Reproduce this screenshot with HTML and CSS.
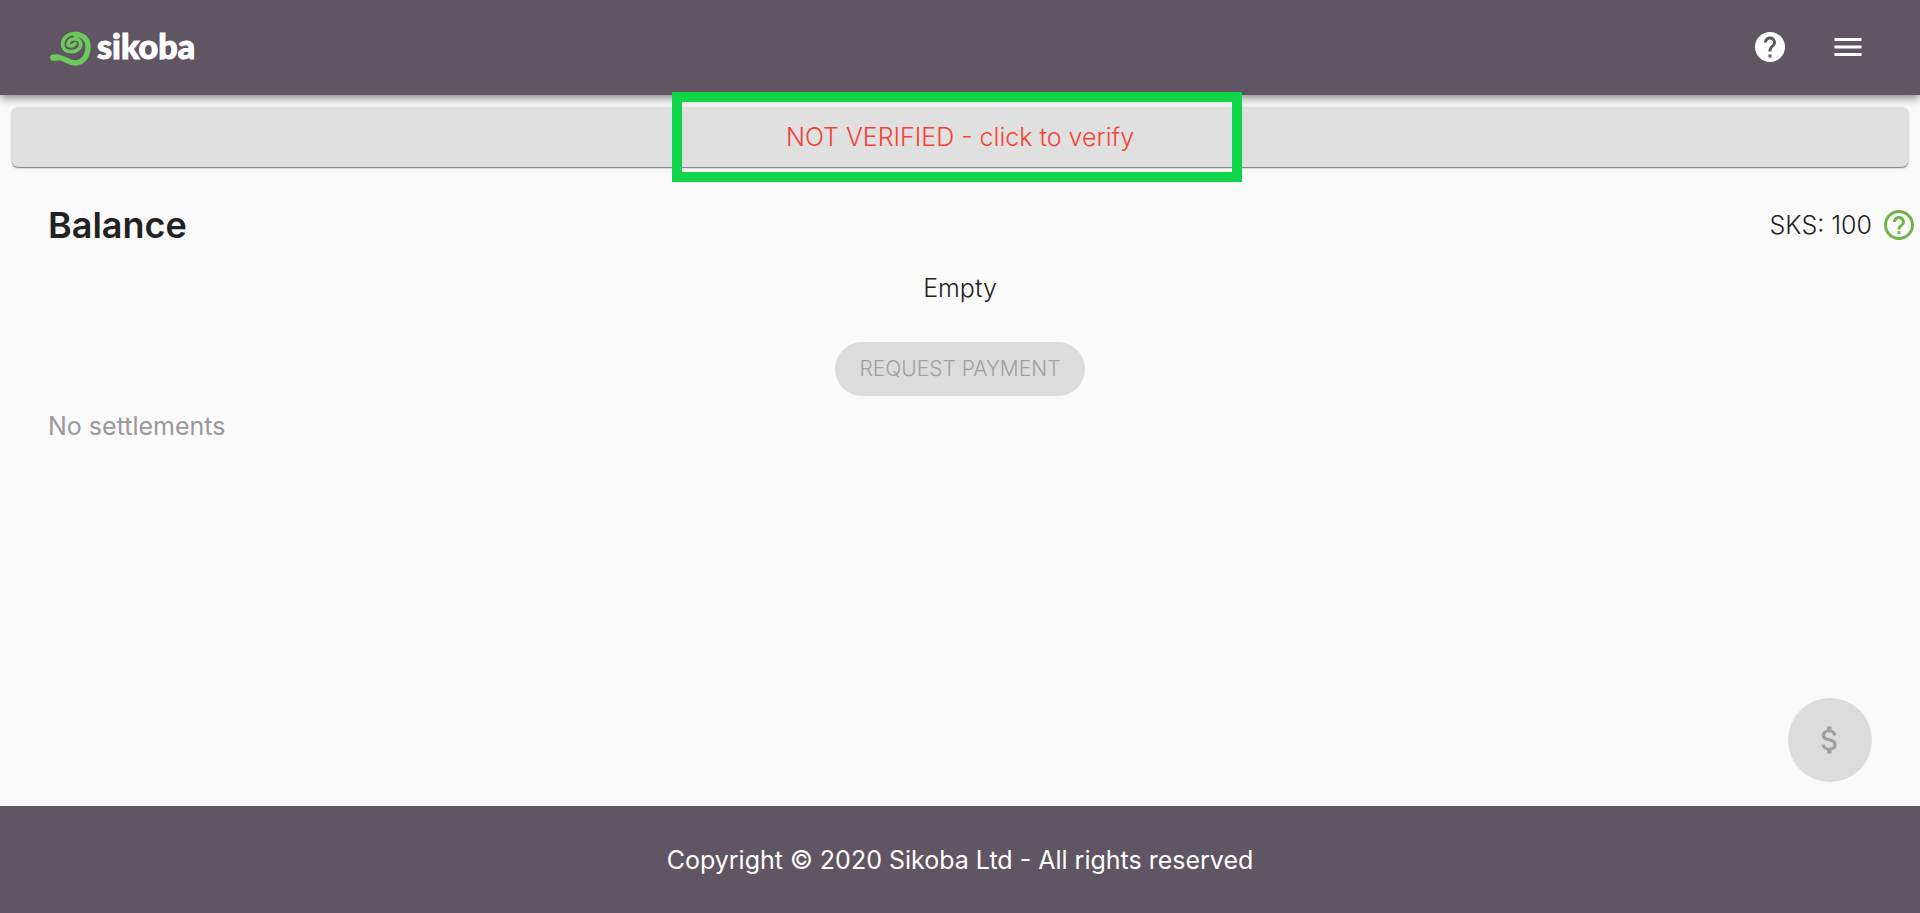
FILE: index.html
```html
<!DOCTYPE html>
<html lang="en">
<head>
<meta charset="utf-8">
<meta name="viewport" content="width=device-width, initial-scale=1">
<title>Sikoba</title>
<link rel="stylesheet" href="styles.css">
</head>
<body class="page">
<header class="header">
  <a class="brand" href="#">
    <svg class="brand-mark" viewBox="0 0 120 105" aria-hidden="true">
      <path class="brand-tip" d="M10 80L24 79"/>
      <path class="brand-tail" d="M10 80H24C44 80 56 96 76 96C100 95 114 74 114 47C114 24 98 11 77 10"/>
      <path class="brand-curl" d="M79 8C56 5 38 20 38 40C39 55 50 63 66 62C82 61 93 51 92 38C91 27 80 22 70 24C58 26 53 34 55 42"/>
      <path class="brand-curl" d="M55 42C58 46 70 46 75 38"/>
    </svg>
    <span class="brand-name">sikoba</span>
  </a>
  <nav class="actions">
    <button class="icon-button" type="button" aria-label="Help">
      <svg class="icon" viewBox="0 0 24 24"><path d="M12 2C6.48 2 2 6.48 2 12s4.48 10 10 10 10-4.480 10-10S17.520 2 12 2zm1 17h-2v-2h2v2zm2.070-7.750l-.9.920C13.450 12.900 13 13.500 13 15h-2v-.5c0-1.100.45-2.100 1.170-2.830l1.240-1.260c.37-.36.590-.86.590-1.410 0-1.100-.9-2-2-2s-2 .9-2 2H8c0-2.210 1.790-4 4-4s4 1.790 4 4c0 .88-.36 1.680-.93 2.250z"/></svg>
    </button>
    <button class="icon-button" type="button" aria-label="Menu">
      <svg class="icon" viewBox="0 0 24 24"><path d="M3 18h18v-2H3v2zm0-5h18v-2H3v2zm0-7v2h18V6H3z"/></svg>
    </button>
  </nav>
</header>
<main class="main">
  <div class="notice">
    <button class="verify" type="button">NOT VERIFIED - click to verify</button>
    <div class="highlight"></div>
  </div>
  <section class="balance">
    <h1 class="title">Balance</h1>
    <div class="credits">
      <span>SKS: 100</span>
      <button class="credits-help" type="button" aria-label="About SKS">
        <svg class="icon" viewBox="0 0 24 24"><path d="M11 18h2v-2h-2v2zm1-16C6.480 2 2 6.480 2 12s4.480 10 10 10 10-4.480 10-10S17.520 2 12 2zm0 18c-4.410 0-8-3.590-8-8s3.590-8 8-8 8 3.590 8 8-3.590 8-8 8zm0-14c-2.210 0-4 1.790-4 4h2c0-1.100.9-2 2-2s2 .9 2 2c0 2-3 1.750-3 5h2c0-2.250 3-2.500 3-5 0-2.210-1.790-4-4-4z"/></svg>
      </button>
    </div>
  </section>
  <p class="empty">Empty</p>
  <button class="request" type="button" disabled>REQUEST PAYMENT</button>
  <p class="settlements">No settlements</p>
  <button class="pay" type="button" disabled aria-label="Pay">
    <svg class="icon" viewBox="0 0 24 24"><path d="M11.800 10.900c-2.270-.59-3-1.200-3-2.150 0-1.090 1.010-1.850 2.700-1.850 1.780 0 2.440.85 2.500 2.100h2.210c-.07-1.720-1.120-3.300-3.210-3.810V3h-3v2.160c-1.940.42-3.500 1.680-3.500 3.610 0 2.310 1.910 3.460 4.700 4.130 2.500.6 3 1.480 3 2.410 0 .69-.49 1.790-2.700 1.790-2.060 0-2.870-.92-2.980-2.100h-2.200c.12 2.190 1.760 3.420 3.680 3.830V21h3v-2.150c1.950-.37 3.500-1.500 3.500-3.550 0-2.840-2.430-3.810-4.700-4.400z"/></svg>
  </button>
</main>
<footer class="footer">Copyright © 2020 Sikoba Ltd - All rights reserved</footer>
</body>
</html>
```
FILE: styles.css
```css
* { box-sizing: border-box; }
.page {
  display: flex;
  flex-direction: column;
  min-height: 100vh;
  margin: 0;
  background: #fafafa;
  color: #222;
  font: 300 25px/32px Inter, "Liberation Sans", sans-serif;
}
button {
  border: 0;
  padding: 0;
  font: inherit;
  color: inherit;
  background: none;
  cursor: pointer;
}
button:disabled { cursor: default; }
.header {
  display: flex;
  align-items: center;
  justify-content: space-between;
  height: 95px;
  padding: 0 45px 2px 50px;
  background: #605562;
  color: #fff;
  box-shadow: 0 3px 6px -1px rgba(0,0,0,.25), 0 6px 8px rgba(0,0,0,.14), 0 1px 14px rgba(0,0,0,.12);
}
.brand {
  display: flex;
  align-items: flex-end;
  gap: 7px;
  padding-bottom: 2px;
  color: #fff;
  text-decoration: none;
}
.brand-mark {
  width: 40px;
  height: 35px;
  fill: none;
  stroke: #6cc95c;
  stroke-linecap: round;
  stroke-linejoin: round;
  overflow: visible;
}
.brand-tip { stroke-width: 19px; }
.brand-tail { stroke-width: 16px; }
.brand-curl { stroke-width: 11px; }
.brand-name {
  font: 900 34px/40px Lato, sans-serif;
  -webkit-text-stroke: 1px #fff;
}
.actions { display: flex; gap: 24px; }
.icon-button { width: 54px; height: 54px; }
.icon {
  display: block;
  width: 36px;
  height: 36px;
  margin: auto;
  fill: currentColor;
}
.main {
  position: relative;
  flex: 1;
  display: flex;
  flex-direction: column;
}
.notice { position: relative; padding: 12px; }
.verify {
  display: block;
  width: 100%;
  height: 60px;
  border-radius: 6px;
  background: #e0e0e0;
  color: #f44336;
  box-shadow: 0 1px 1px rgba(0,0,0,.4), 0 1px 3px rgba(0,0,0,.2);
}
.highlight {
  position: absolute;
  top: -3px;
  left: 35%;
  width: 570px;
  height: 90px;
  border: 10px solid #10d448;
  pointer-events: none;
}
.balance {
  display: flex;
  align-items: center;
  justify-content: space-between;
  margin-top: 24px;
  padding: 0 3px 0 48px;
}
.title { margin: 0; font-size: 36px; font-weight: 600; line-height: 44px; }
.credits { display: flex; align-items: center; gap: 9px; }
.credits-help { color: #70b348; }
.empty { margin: 25px 0 38px; text-align: center; }
.request {
  align-self: center;
  height: 54px;
  padding: 0 24px;
  border-radius: 27px;
  background: #dcdcdc;
  color: #a0a0a0;
  font-size: 21px;
}
.settlements { margin: 14px 48px; color: #999; font-weight: 400; }
.pay {
  position: absolute;
  right: 48px;
  bottom: 24px;
  width: 84px;
  height: 84px;
  border-radius: 50%;
  background: #dcdcdc;
  color: #a0a0a0;
}
.footer {
  padding: 38px 24px 37px;
  background: #605562;
  color: #fff;
  text-align: center;
  font-weight: 400;
}
```
